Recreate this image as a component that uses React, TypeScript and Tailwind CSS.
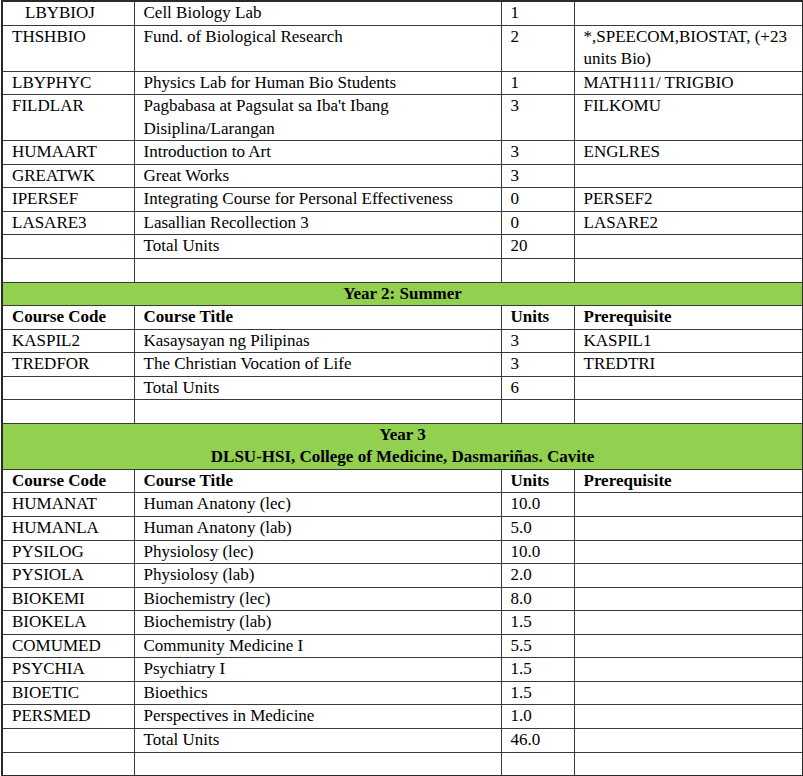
import React from "react";

type Row = { code?: string; title?: React.ReactNode; units?: string; pre?: React.ReactNode; indent?: boolean };

const block1: Row[] = [
  { code: "LBYBIOJ", title: "Cell Biology Lab", units: "1", pre: "", indent: true },
  { code: "THSHBIO", title: "Fund. of Biological Research", units: "2", pre: <>*,SPEECOM,BIOSTAT, (+23<br />units Bio)</> },
  { code: "LBYPHYC", title: "Physics Lab for Human Bio Students", units: "1", pre: "MATH111/ TRIGBIO" },
  { code: "FILDLAR", title: <>Pagbabasa at Pagsulat sa Iba't Ibang<br />Disiplina/Larangan</>, units: "3", pre: "FILKOMU" },
  { code: "HUMAART", title: "Introduction to Art", units: "3", pre: "ENGLRES" },
  { code: "GREATWK", title: "Great Works", units: "3", pre: "" },
  { code: "IPERSEF", title: "Integrating Course for Personal Effectiveness", units: "0", pre: "PERSEF2" },
  { code: "LASARE3", title: "Lasallian Recollection 3", units: "0", pre: "LASARE2" },
  { code: "", title: "Total Units", units: "20", pre: "" },
  { code: "", title: "", units: "", pre: "" },
];

const block2: Row[] = [
  { code: "KASPIL2", title: "Kasaysayan ng Pilipinas", units: "3", pre: "KASPIL1" },
  { code: "TREDFOR", title: "The Christian Vocation of Life", units: "3", pre: "TREDTRI" },
  { code: "", title: "Total Units", units: "6", pre: "" },
  { code: "", title: "", units: "", pre: "" },
];

const block3: Row[] = [
  { code: "HUMANAT", title: "Human Anatony (lec)", units: "10.0" },
  { code: "HUMANLA", title: "Human Anatony (lab)", units: "5.0" },
  { code: "PYSILOG", title: "Physiolosy (lec)", units: "10.0" },
  { code: "PYSIOLA", title: "Physiolosy (lab)", units: "2.0" },
  { code: "BIOKEMI", title: "Biochemistry (lec)", units: "8.0" },
  { code: "BIOKELA", title: "Biochemistry (lab)", units: "1.5" },
  { code: "COMUMED", title: "Community Medicine I", units: "5.5" },
  { code: "PSYCHIA", title: "Psychiatry I", units: "1.5" },
  { code: "BIOETIC", title: "Bioethics", units: "1.5" },
  { code: "PERSMED", title: "Perspectives in Medicine", units: "1.0" },
  { code: "", title: "Total Units", units: "46.0" },
  { code: "", title: "", units: "" },
];

const td = "border border-[#3a3a3a] align-top pl-[9px] pr-1 py-0 whitespace-nowrap";

function BodyRows({ rows }: { rows: Row[] }) {
  return (
    <>
      {rows.map((r, i) => (
        <tr key={i}>
          <td className={`${td} ${r.indent ? "pl-[22px]" : "pl-[8px]"}`}>{r.code || "\u00a0"}</td>
          <td className={td}>{r.title || "\u00a0"}</td>
          <td className={td}>{r.units || "\u00a0"}</td>
          <td className={td}>{r.pre || "\u00a0"}</td>
        </tr>
      ))}
    </>
  );
}

function HeadRow() {
  return (
    <tr className="font-bold">
      <td className={`${td} pl-[8px]`}>Course Code</td>
      <td className={td}>Course Title</td>
      <td className={td}>Units</td>
      <td className={td}>Prerequisite</td>
    </tr>
  );
}

export default function App() {
  return (
    <div className="w-[803px] h-[776px] bg-white overflow-hidden">
      <table
        className="ml-[1px] w-[801px] table-fixed border-collapse border-2 border-[#2a2a2a] text-black text-[17px] leading-[22.55px]"
        style={{ fontFamily: '"Liberation Serif", "Times New Roman", serif' }}
      >
        <colgroup>
          <col className="w-[132px]" />
          <col className="w-[367px]" />
          <col className="w-[73px]" />
          <col className="w-[229px]" />
        </colgroup>
        <tbody>
          <BodyRows rows={block1} />
          <tr>
            <td colSpan={4} className="border border-[#3a3a3a] bg-[#92d050] text-center font-bold py-0">
              Year 2: Summer
            </td>
          </tr>
          <HeadRow />
          <BodyRows rows={block2} />
          <tr>
            <td colSpan={4} className="border border-[#3a3a3a] bg-[#92d050] text-center font-bold py-0">
              Year 3
              <br />
              DLSU-HSI, College of Medicine, Dasmariñas. Cavite
            </td>
          </tr>
          <HeadRow />
          <BodyRows rows={block3} />
        </tbody>
      </table>
    </div>
  );
}
